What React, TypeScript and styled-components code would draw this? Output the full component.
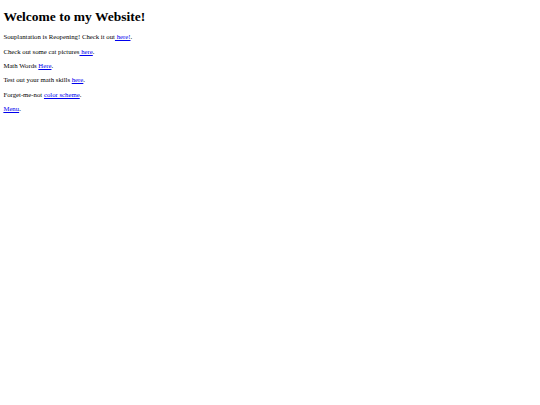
import React from 'react';
import styled, { createGlobalStyle } from 'styled-components';

const GlobalStyle = createGlobalStyle`
  html, body {
    background: #ffffff;
  }
  body {
    margin: 3.375px;
    font-family: "Liberation Serif", "Times New Roman", serif;
    font-size: 6.75px;
    color: #000000;
  }
`;

const Page = styled.main`
  display: block;
`;

const Heading = styled.h1`
  font-size: 13.5px;
  line-height: 15.4px;
  font-weight: bold;
  margin: 5.4px 0 9px;
`;

const Line = styled.p`
  font-size: 6.75px;
  line-height: 7.65px;
  margin: 6.75px 0;
`;

const Link = styled.a`
  color: #0000ee;
  text-decoration: underline;
`;

const App: React.FC = () => {
  return (
    <>
      <GlobalStyle />
      <Page>
        <Heading>Welcome to my Website!</Heading>
        <Line>
          Souplantation is Reopening! Check it out<Link href="#"> here!</Link>.
        </Line>
        <Line>
          Check out some cat pictures<Link href="#"> here</Link>.
        </Line>
        <Line>
          Math Words <Link href="#">Here</Link>.
        </Line>
        <Line>
          Test out your math skills <Link href="#">here</Link>.
        </Line>
        <Line>
          Forget-me-not <Link href="#">color scheme</Link>.
        </Line>
        <Line>
          <Link href="#">Menu</Link>.
        </Line>
      </Page>
    </>
  );
};

export default App;
